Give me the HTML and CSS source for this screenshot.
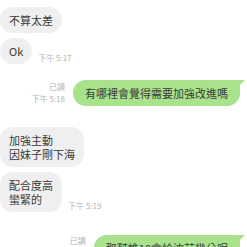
FILE: index.html
```html
<!DOCTYPE html>
<html lang="zh-Hant">
<head>
  <meta charset="UTF-8" />
  <meta name="viewport" content="width=device-width, initial-scale=1.0" />
  <title>聊天</title>
  <link rel="stylesheet" href="styles.css">
</head>
<body>
  <div class="chat">
    <div class="row in first">
      <div class="bubble">不算太差</div>
    </div>
    <div class="row in tight">
      <div class="bubble">Ok</div>
      <div class="meta"><span>下午 5:17</span></div>
    </div>

    <div class="row out gap">
      <div class="meta"><span>已讀</span><span>下午 5:18</span></div>
      <div class="bubble">有哪裡會覺得需要加強改進嗎</div>
    </div>

    <div class="row in gap-lg">
      <div class="bubble">加強主動<br>因妹子剛下海</div>
    </div>
    <div class="row in tight">
      <div class="bubble">配合度高<br>蠻緊的</div>
      <div class="meta"><span>下午 5:19</span></div>
    </div>

    <div class="row out gap-lg last">
      <div class="meta"><span>已讀</span><span>下午 5:20</span></div>
      <div class="bubble">那幫誰10會給沈芯幾分呢</div>
    </div>
  </div>
</body>
</html>
```

FILE: styles.css
```css
* { margin: 0; padding: 0; box-sizing: border-box; }
html, body { height: 100%; }
body {
  background: #fff;
  overflow: hidden;
  font-family: "Noto Sans CJK TC", "Noto Sans", sans-serif;
  color: #3a3a3a;
}
.chat {
  display: flex;
  flex-direction: column;
  padding-top: 7px;
}
.row {
  display: flex;
  align-items: flex-end;
  gap: 6px;
}
.row.tight { margin-top: 5px; }
.row.gap { margin-top: 16px; }
.row.gap-lg { margin-top: 21px; }
.row.last { margin-top: 23px; }
.row.out {
  justify-content: flex-end;
  padding-right: 7px;
  gap: 8px;
}
.bubble {
  position: relative;
  font-size: 11px;
  line-height: 14px;
  padding: 6px 9px;
  border-radius: 13px;
  background: #efefef;
  white-space: nowrap;
}
.out .bubble {
  background: #a8e28b;
  padding: 6px 12px;
  border-top-right-radius: 4px;
}
.out .bubble::after {
  content: "";
  position: absolute;
  top: 0;
  right: -5px;
  border-top: 7px solid #a8e28b;
  border-right: 7px solid transparent;
}
.meta {
  display: flex;
  flex-direction: column;
  align-items: flex-end;
  font-size: 8px;
  line-height: 12px;
  color: #b4b4b4;
  padding-bottom: 1px;
}
.in .meta { padding-bottom: 0; }
.out.last { align-items: flex-start; }
```
